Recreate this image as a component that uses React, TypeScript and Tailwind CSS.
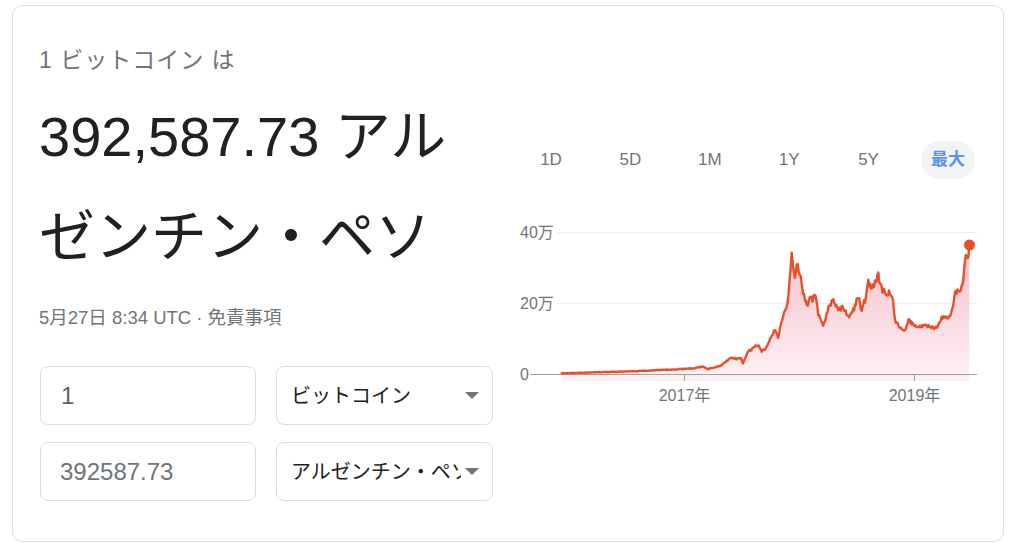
import React from "react";

const FONT = '"Liberation Sans", "Noto Sans CJK JP", Arial, sans-serif';

const KEY: [number, number][] = [
  [561.7, 373.3], [600, 372.2], [640, 371], [683, 369], [695, 368], [703, 366.7], [708, 369],
  [720, 366], [731.7, 357.3], [736.7, 359], [741, 358], [743, 363], [748, 352], [753, 348],
  [758, 345], [761.7, 351.7], [766.7, 346.7], [770, 338], [773, 334], [775, 330], [778, 338],
  [781, 325], [783, 316.7], [786.7, 306.7], [788.5, 295], [791.7, 255], [793, 262], [795, 276.7],
  [797.7, 263.3], [801.7, 285], [804, 295], [806.7, 306.7], [810.7, 296.7], [812.5, 300],
  [815, 293.3], [818.3, 315], [823.3, 325], [828.3, 308.3], [833.3, 298.3], [838.3, 310],
  [843.3, 306.7], [848.3, 316.7], [853.3, 310], [858.3, 296.7], [861.7, 310], [865, 300],
  [868.3, 281.7], [871, 288], [875, 283.3], [878.3, 275], [880, 285], [883.3, 291.7],
  [890, 293.3], [893, 300], [895, 320], [900, 328.3], [905, 330], [908.3, 320], [913.3, 325],
  [921.7, 326.7], [926.7, 325], [935, 329], [938, 325], [941.7, 318.3], [946, 318], [950, 316],
  [953, 305], [955, 293.3], [960, 290], [963.3, 280], [965, 260], [968.3, 255], [969.3, 245],
];

function buildLine(): string {
  const pts: [number, number][] = [];
  for (let i = 0; i < KEY.length - 1; i++) {
    const [x0, y0] = KEY[i];
    const [x1, y1] = KEY[i + 1];
    const steps = Math.max(1, Math.round((x1 - x0) / 0.9));
    for (let s = 0; s < steps; s++) {
      const t = s / steps;
      const x = x0 + (x1 - x0) * t;
      const y = y0 + (y1 - y0) * t;
      const h = Math.sin(x * 12.9898) * 43758.5453;
      const r = (h - Math.floor(h)) * 2 - 1;
      const amp = Math.min(4, (374 - y) * 0.035 + 0.2);
      pts.push([x, y + r * amp]);
    }
  }
  pts.push(KEY[KEY.length - 1]);
  return pts.map((p, i) => `${i === 0 ? "M" : "L"}${p[0].toFixed(2)} ${p[1].toFixed(2)}`).join(" ");
}

const LINE = buildLine();
const AREA = `${LINE} L969.3 381 L561.7 381 Z`;

function Arrow() {
  return (
    <svg width="14" height="7" viewBox="0 0 14 7" className="shrink-0 ml-[4px]">
      <path d="M0 0 L14 0 L7 7 Z" fill="#757575" />
    </svg>
  );
}

function Chart() {
  return (
    <svg width="462" height="190" viewBox="518 215 462 190" style={{ fontFamily: FONT }}>
      <defs>
        <linearGradient id="fillg" x1="0" y1="245" x2="0" y2="381" gradientUnits="userSpaceOnUse">
          <stop offset="0" stopColor="#f6c0cc" />
          <stop offset="1" stopColor="#fdf1f4" />
        </linearGradient>
      </defs>
      <line x1="557" y1="232.5" x2="977" y2="232.5" stroke="#eeeeee" strokeWidth="1" />
      <line x1="557" y1="303.5" x2="977" y2="303.5" stroke="#eeeeee" strokeWidth="1" />
      <path d={AREA} fill="url(#fillg)" />
      <line x1="530" y1="374.5" x2="977" y2="374.5" stroke="#9aa0a6" strokeWidth="1" />
      <line x1="684.5" y1="374" x2="684.5" y2="381" stroke="#9aa0a6" strokeWidth="1" />
      <line x1="914.5" y1="374" x2="914.5" y2="381" stroke="#9aa0a6" strokeWidth="1" />
      <path d={LINE} fill="none" stroke="#e8502d" strokeWidth="2.4" strokeLinejoin="round" strokeLinecap="round" />
      <circle cx="969.5" cy="245" r="5.5" fill="#e8502d" />
      <text x="520" y="238" fontSize="16" fill="#70757a">40万</text>
      <text x="520" y="309" fontSize="16" fill="#70757a">20万</text>
      <text x="520" y="380" fontSize="16" fill="#70757a">0</text>
      <text x="684.5" y="401" fontSize="16" fill="#70757a" textAnchor="middle">2017年</text>
      <text x="914.5" y="401" fontSize="16" fill="#70757a" textAnchor="middle">2019年</text>
    </svg>
  );
}

export default function App() {
  const ranges = ["1D", "5D", "1M", "1Y", "5Y"];
  return (
    <div className="w-[1024px] h-[557px] bg-white pt-[5px] pl-[12px]" style={{ fontFamily: FONT }}>
      <div className="w-[992px] h-[537px] border border-[#dadce0] rounded-[10px] flex">
        <div className="w-[481px] pl-[26px] flex flex-col">
          <div className="mt-[40px] h-[28px] leading-[28px] text-[23px] tracking-[1px] text-[#70757a]">1 ビットコイン は</div>
          <div className="mt-[13px] text-[56px] leading-[100px] text-[#202124]">
            392,587.73 アル
            <br />
            ゼンチン・ペソ
          </div>
          <div className="mt-[19px] h-[24px] leading-[24px] text-[18.5px] text-[#70757a]">5月27日 8:34 UTC · 免責事項</div>
          <div className="mt-[36px] ml-[1px] grid grid-cols-[216px_217px] gap-x-[20px] gap-y-[17px]">
            <div className="h-[59px] border border-[#dadce0] rounded-[8px] flex items-center pl-[20px] text-[24px] text-[#5f6368]">1</div>
            <div className="h-[59px] border border-[#dadce0] rounded-[8px] flex items-center pl-[14px] pr-[13px] text-[20px] text-[#202124]">
              <span className="flex-1 overflow-hidden whitespace-nowrap">ビットコイン</span>
              <Arrow />
            </div>
            <div className="h-[59px] border border-[#dadce0] rounded-[8px] flex items-center pl-[19px] text-[24px] text-[#70757a]">392587.73</div>
            <div className="h-[59px] border border-[#dadce0] rounded-[8px] flex items-center pl-[14px] pr-[13px] text-[20px] text-[#202124]">
              <span className="flex-1 overflow-hidden whitespace-nowrap">アルゼンチン・ペソ</span>
              <Arrow />
            </div>
          </div>
        </div>
        <div className="ml-[26px] w-[457px] flex flex-col">
          <div className="mt-[135px] flex justify-between items-center pl-[4px] pr-[2px]">
            {ranges.map((r) => (
              <div key={r} className="w-[54px] h-[38px] flex items-center justify-center text-[17px] text-[#70757a]">{r}</div>
            ))}
            <div className="w-[54px] h-[38px] rounded-full bg-[#f1f3f4] flex items-center justify-center text-[17px] font-bold text-[#5b93f0]">最大</div>
          </div>
          <div className="mt-[36px] -ml-[2px]">
            <Chart />
          </div>
        </div>
      </div>
    </div>
  );
}
